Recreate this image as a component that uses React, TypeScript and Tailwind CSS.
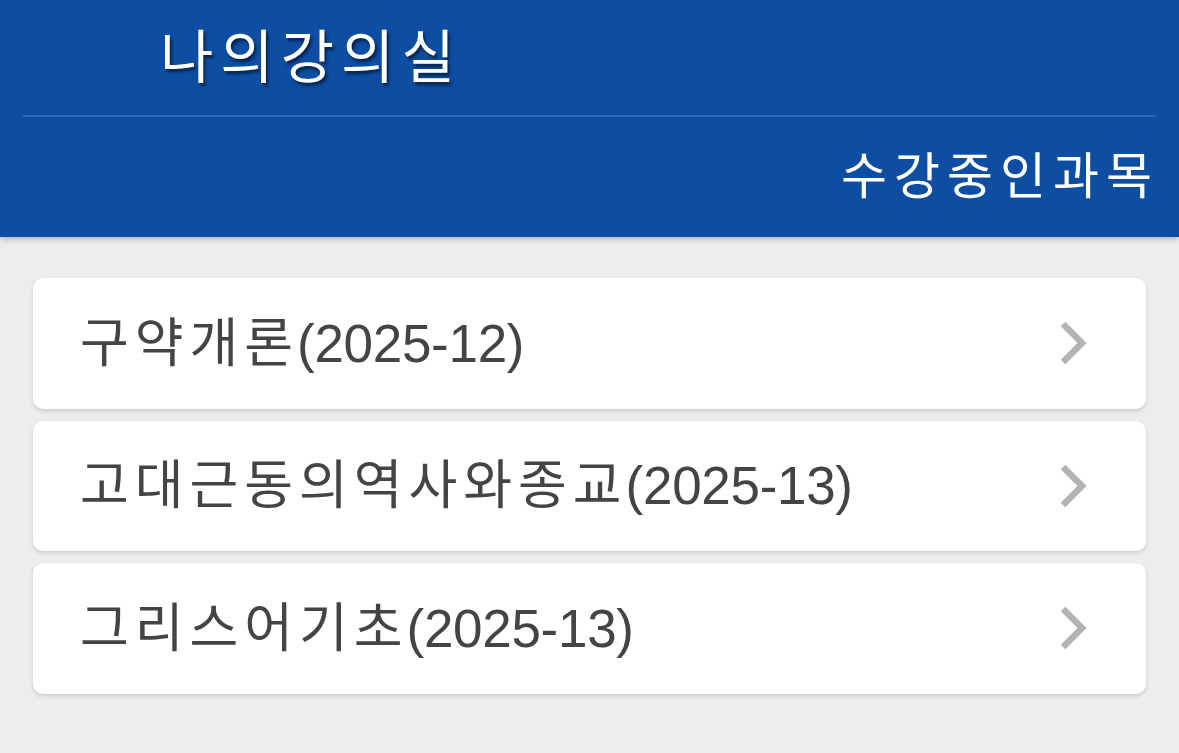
const courses = [
  { name: "구약개론", term: "(2025-12)" },
  { name: "고대근동의역사와종교", term: "(2025-13)" },
  { name: "그리스어기초", term: "(2025-13)" },
];

const ChevronRight = () => (
  <svg width="30" height="46" viewBox="0 0 30 46" fill="none">
    <path d="M4 4 L23 23 L4 42" stroke="#b3b3b3" strokeWidth="6.5" strokeLinecap="butt" strokeLinejoin="miter" />
  </svg>
);

export default function App() {
  return (
    <div
      className="w-[1179px] h-[753px] overflow-hidden bg-[#ededed]"
      style={{ fontFamily: '"Liberation Sans", "Noto Sans CJK KR", sans-serif' }}
    >
      <header className="relative z-10 h-[237px] bg-[#0d4da2] shadow-[0_2px_6px_rgba(0,0,0,0.25)] flex flex-col">
        <div className="h-[115px] flex items-center pl-[160px]">
          <h1
            className="text-[58px] leading-none text-white tracking-[7px] [text-shadow:2px_3px_3px_rgba(0,0,0,0.55)] -mt-[9px]"
            style={{ fontFamily: '"Noto Sans CJK KR", sans-serif' }}
          >
            나의강의실
          </h1>
        </div>
        <div className="mx-[23px] h-[2px] bg-[#3367b3]" />
        <div className="flex-1 flex items-center justify-end pr-[20px]">
          <h2
            className="text-[50px] leading-none text-white tracking-[7px] -mt-[10px]"
            style={{ fontFamily: '"Noto Sans CJK KR", sans-serif' }}
          >
            수강중인과목
          </h2>
        </div>
      </header>

      <main className="px-[33px] pt-[41px] flex flex-col gap-3">
        {courses.map((c) => (
          <div
            key={c.name}
            className="h-[130.5px] bg-white rounded-[10px] shadow-[0_2px_4px_rgba(0,0,0,0.15)] flex items-center justify-between pl-[47px] pr-[57px]"
          >
            <span className="text-[53px] leading-none text-[#444444] -mt-[4px]">
              <span className="tracking-[6px]" style={{ fontFamily: '"Noto Sans CJK KR", sans-serif' }}>
                {c.name}
              </span>
              <span className="tracking-[-0.3px] -ml-[2px]">{c.term}</span>
            </span>
            <ChevronRight />
          </div>
        ))}
      </main>
    </div>
  );
}
